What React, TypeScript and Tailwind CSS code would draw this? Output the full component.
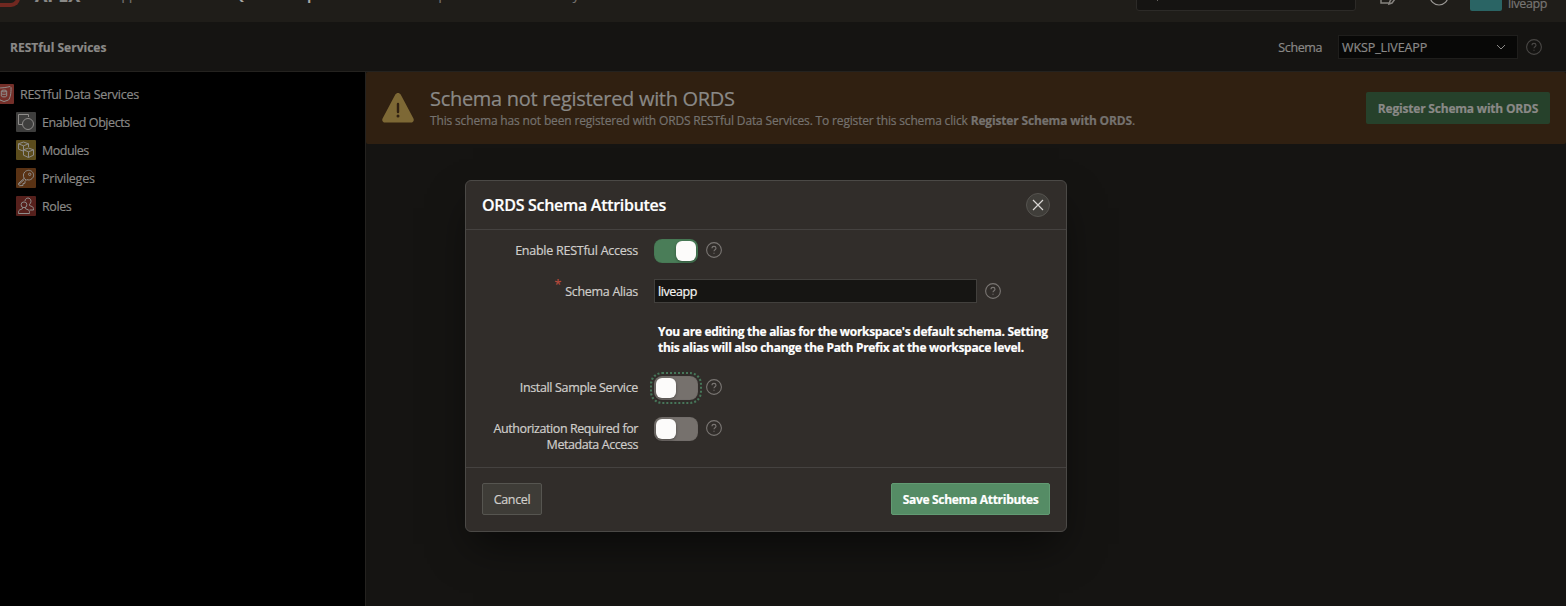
import React from "react";

function Help({ className = "" }: { className?: string }) {
  return (
    <svg viewBox="0 0 16 16" className={"size-4 shrink-0 " + className} fill="none" stroke="currentColor" strokeWidth="1.1">
      <circle cx="8" cy="8" r="7.4" />
      <path d="M6 6.3C6 5.1 6.800 4.400 8 4.400s2 .8 2 1.800c0 1.500-2 1.500-2 3.100" />
      <path d="M8 10.700v1.100" />
    </svg>
  );
}

function Toggle({ on = false, focus = false }: { on?: boolean; focus?: boolean }) {
  return (
    <div
      className={
        "mt-px flex h-6 w-11 shrink-0 items-center rounded-lg p-0.5 shadow-[inset_0_0_1px_rgba(0,0,0,0.3)] " +
        (on ? "justify-end bg-[#4a7d58] " : "bg-[#76716d] ") +
        (focus ? "outline-2 outline-offset-2 outline-dotted outline-[#47775a]" : "")
      }
    >
      <div className="size-5 rounded-md bg-[#fcfbfa] shadow-[0_1px_3px_rgba(0,0,0,0.35)]" />
    </div>
  );
}

function TreeIcon({ kind }: { kind: string }) {
  return (
    <svg viewBox="0 0 20 20" className="size-5 shrink-0" fill="none" stroke="#8f8d8b" strokeWidth="1">
      {kind === "data" && (
        <>
          <rect width="20" height="20" rx="1" fill="#742f29" stroke="none" />
          <path d="M3.500 4c4.500 0 9-.5 12.500-1.500l1 1c.3 5.500-.8 10.500-2.500 12.500l-4.500 1.500-4-1.500C4 14 3 9 3.500 4z" />
          <ellipse cx="10" cy="7" rx="2.700" ry=".9" />
          <path d="M7.300 7v5c0 1.200 5.400 1.200 5.400 0V7M7.300 9.500c0 1.100 5.400 1.100 5.400 0" />
        </>
      )}
      {kind === "objects" && (
        <>
          <rect width="20" height="20" rx="1" fill="#3e3e3d" stroke="none" />
          <path d="M6 12.500H2.500v-10h10V5" />
          <circle cx="12" cy="12" r="5.500" />
        </>
      )}
      {kind === "modules" && (
        <>
          <rect width="20" height="20" rx="1" fill="#5b4c1c" stroke="none" />
          <path d="M12.500 7V3.800L7.500 2l-5 1.800v5.400l5 2M2.500 3.800l5 2 5-2M7.500 5.800v5.400" />
          <path d="M12.500 8l5 1.800v5.400l-5 2.300-5-2.300V9.800zM7.500 9.800l5 2 5-2M12.500 11.800v5.700" />
        </>
      )}
      {kind === "privileges" && (
        <>
          <rect width="20" height="20" rx="1" fill="#593214" stroke="none" />
          <path d="M8.200 10.300C7 8.500 7.200 5.500 8.800 4c2-2.200 5.500-2.200 7.400-.2s1.900 5-.2 6.800c-1.500 1.500-3.500 1.700-5.200 1L9 13.500v1.700l-2 .3v2l-3.500.2-.9-.9v-1.500z" />
          <path d="M8.200 10.300L10 12M2.800 16.500l5.500-5" />
          <circle cx="13.700" cy="6.300" r="1.200" />
        </>
      )}
      {kind === "roles" && (
        <>
          <rect width="20" height="20" rx="1" fill="#56201c" stroke="none" />
          <circle cx="8" cy="8.800" r="2.900" />
          <path d="M6.500 11.300v1.400L3.500 14c-.8.500-1 1.500-1 3.500h11c0-2-.2-3-1-3.500l-3-1.300v-1.400" />
          <path d="M9 5c.2-4 6-4 6 .3 0 1.300-.7 2.300-1.500 3v1.200l2.700 1.100c1 .5 1.300 1.400 1.300 3.400h-4" />
        </>
      )}
    </svg>
  );
}

const tree = [
  { kind: "objects", label: "Enabled Objects", track: "tracking-[-0.43px]" },
  { kind: "modules", label: "Modules", track: "tracking-[-0.5px]" },
  { kind: "privileges", label: "Privileges", track: "tracking-[-0.25px]" },
  { kind: "roles", label: "Roles", track: "tracking-[-0.4px]" },
];

export default function App() {
  return (
    <div className="relative flex h-[606px] w-[1566px] flex-col overflow-hidden bg-[#151412] font-['Open_Sans','Noto_Sans',sans-serif] text-[12.5px] leading-4 whitespace-nowrap text-[#8a8987] [-webkit-text-stroke:0.2px]">
      <header className="flex h-[22px] shrink-0 items-start overflow-hidden bg-[#1f1d19]">
        <div className="-mt-3 h-[19px] w-[20px] rounded-br-[9px] border-r-[4px] border-b-[4px] border-[#702820]" />
        <div className="-mt-[15px] ml-[15px] w-[79px] text-[18px] leading-5 font-bold tracking-[-0.2px]">APEX</div>
        <nav className="-mt-[12px] flex tracking-[-0.3px] text-[#777573]">
          <div className="w-[112px]">App Builder</div>
          <div className="w-[140px] pl-0.5 font-bold text-[#aaa8a5]">SQL Workshop</div>
          <div className="w-[170px]">Team Development</div>
          <div className="pl-1">Gallery</div>
        </nav>
        <div className="grow" />
        <div className="-mt-[21px] mr-6 flex h-8 w-[220px] items-center gap-2 rounded-[3px] border border-[#2c2a27] bg-[#151412] px-5">
          <svg viewBox="0 0 12 12" className="size-3" fill="none" stroke="#65625f"><circle cx="6" cy="6" r="4" /><path d="M3 9l-3 3" /></svg>
          <span className="text-[#65625f]">Search</span>
        </div>
        <svg viewBox="0 0 18 18" className="-mt-[12px] h-[18px] w-[18px]" fill="none" stroke="#85827e" strokeWidth="1.500"><path d="M1 5v10h8M9 16l3-1 6-8-2-2-6 8z" /></svg>
        <svg viewBox="0 0 20 20" className="-mt-[14px] ml-[31px] size-5" fill="none" stroke="#9a9895" strokeWidth="1.200"><circle cx="10" cy="10" r="9" /><path d="M10 12v2" /></svg>
        <div className="-mt-5 ml-[21px] h-[31px] w-8 rounded-[2px] bg-[#2a6464]" />
        <div className="-mt-1 mr-[19px] ml-[6px] tracking-[-0.4px] text-[#777573]">liveapp</div>
      </header>

      <div className="flex h-[50px] shrink-0 items-center border-b border-[#24221f] pr-6 pl-[10px]">
        <h1 className="grow pt-0.5 text-[12px] font-bold tracking-[0px]">RESTful Services</h1>
        <span className="mr-4 pt-0.5 tracking-[-0.4px]">Schema</span>
        <div className="flex h-6 w-[180px] items-center justify-between border border-[#1f1e1c] bg-[#080807] pr-[10px] pl-[3px] tracking-[-0.1px]">
          <span className="pt-0.5">WKSP_LIVEAPP</span>
          <svg viewBox="0 0 12 12" className="size-3" fill="none" stroke="currentColor"><path d="M2 4l4 4 4-4" /></svg>
        </div>
        <Help className="ml-2 text-[#494745]" />
      </div>

      <div className="flex grow">
        <aside className="w-[366px] shrink-0 border-r border-[#24221f] bg-black pt-[8px]">
          <div className="-ml-[6px] flex h-7 items-center gap-[6px]">
            <TreeIcon kind="data" />
            <span className="pt-0.5 tracking-[-0.28px]">RESTful Data Services</span>
          </div>
          {tree.map((t) => (
            <div key={t.kind} className="flex h-7 items-center gap-[6px] pl-4">
              <TreeIcon kind={t.kind} />
              <span className={"pt-0.5 " + t.track}>{t.label}</span>
            </div>
          ))}
        </aside>
        <main className="grow">
          <section className="flex h-[72px] items-center rounded-[2px] bg-[#302011] pr-4 pl-4">
            <svg viewBox="0 0 32 32" className="size-8 shrink-0">
              <path d="M13.300 2.600c1.200-2.200 4.200-2.200 5.400 0l12.600 23.600c1.200 2.200 0 4.300-2.500 4.300H3.200C.7 30.500-.5 28.400.7 26.200z" fill="#7d6835" />
              <path d="M16 12v8" stroke="#302011" strokeWidth="2.400" strokeLinecap="round" />
              <circle cx="16" cy="24" r="1.500" fill="#302011" />
            </svg>
            <div className="ml-4 grow">
              <h2 className="text-[20px] leading-6 tracking-[-0.3px]">Schema not registered with ORDS</h2>
              <p className="mt-0.5 text-[12px] leading-4 tracking-[-0.16px] text-[#75726f]">
                This schema has not been registered with ORDS RESTful Data Services. To register this schema click <b>Register Schema with ORDS</b>.
              </p>
            </div>
            <button className="h-8 w-[184px] rounded-[2px] bg-[#26412b] pt-0.5 text-[12px] font-bold tracking-[-0.2px]">Register Schema with ORDS</button>
          </section>
        </main>
      </div>

      <div role="dialog" className="absolute top-[180px] left-[465px] flex h-[352px] w-[602px] flex-col rounded-md border border-[#4b4946] bg-[#312d2a] text-[#d0cecb] shadow-[0_20px_40px_-8px_rgba(0,0,0,0.55)]">
        <div className="flex h-[49px] shrink-0 items-center justify-between border-b border-[#454240] px-4">
          <h2 className="text-[16px] font-semibold tracking-[-0.29px] text-white">ORDS Schema Attributes</h2>
          <div className="flex size-6 items-center justify-center rounded-full border border-[#55534f] bg-[#403e3a]">
            <svg viewBox="0 0 12 12" className="size-3" fill="none" stroke="#d8d6d3" strokeWidth="1.200"><path d="M1 1l10 10M11 1L1 11" /></svg>
          </div>
        </div>
        <div className="flex grow flex-col pt-2">
          <div className="flex h-[41px] items-start">
            <label className="mt-[5px] mr-4 w-[172px] text-right tracking-[-0.25px]">Enable RESTful Access</label>
            <Toggle on />
            <Help className="mt-1 ml-2 text-[#7a7673]" />
          </div>
          <div className="flex h-[45px] items-start">
            <label className="mt-[5px] mr-4 flex w-[172px] justify-end gap-1 tracking-[-0.3px]"><span className="-mt-[7px] text-[#b84a3c]">*</span>Schema Alias</label>
            <div className="h-6 w-[323px] border border-[#42403d] bg-[#161513] px-[3px] pt-1 tracking-[-0.4px] text-[#f5f4f2]">liveapp</div>
            <Help className="mt-1 ml-2 text-[#7a7673]" />
          </div>
          <div className="ml-48 h-[51px] text-[12px] leading-4 font-bold tracking-[-0.3px] text-white">
            You are editing the alias for the workspace's default schema. Setting
            <br />
            this alias will also change the Path Prefix at the workspace level.
          </div>
          <div className="flex h-[41px] items-start">
            <label className="mt-[5px] mr-4 w-[172px] text-right tracking-[-0.35px]">Install Sample Service</label>
            <Toggle focus />
            <Help className="mt-1 ml-2 text-[#7a7673]" />
          </div>
          <div className="flex items-start">
            <label className="mt-[5px] mr-4 w-[172px] text-right tracking-[-0.42px]">Authorization Required for<br />Metadata Access</label>
            <Toggle />
            <Help className="mt-1 ml-2 text-[#7a7673]" />
          </div>
        </div>
        <footer className="flex h-16 shrink-0 items-start justify-between border-t border-[#454240] px-4 pt-[15px]">
          <button className="h-8 w-[60px] rounded-[2px] border border-[#565550] bg-[#3e3c37] pt-0.5 tracking-[-0.35px]">Cancel</button>
          <button className="h-8 w-[159px] rounded-[2px] border border-[#629b73] bg-[#558c65] pt-px text-[12px] font-bold tracking-[-0.3px] text-white">Save Schema Attributes</button>
        </footer>
      </div>
    </div>
  );
}
